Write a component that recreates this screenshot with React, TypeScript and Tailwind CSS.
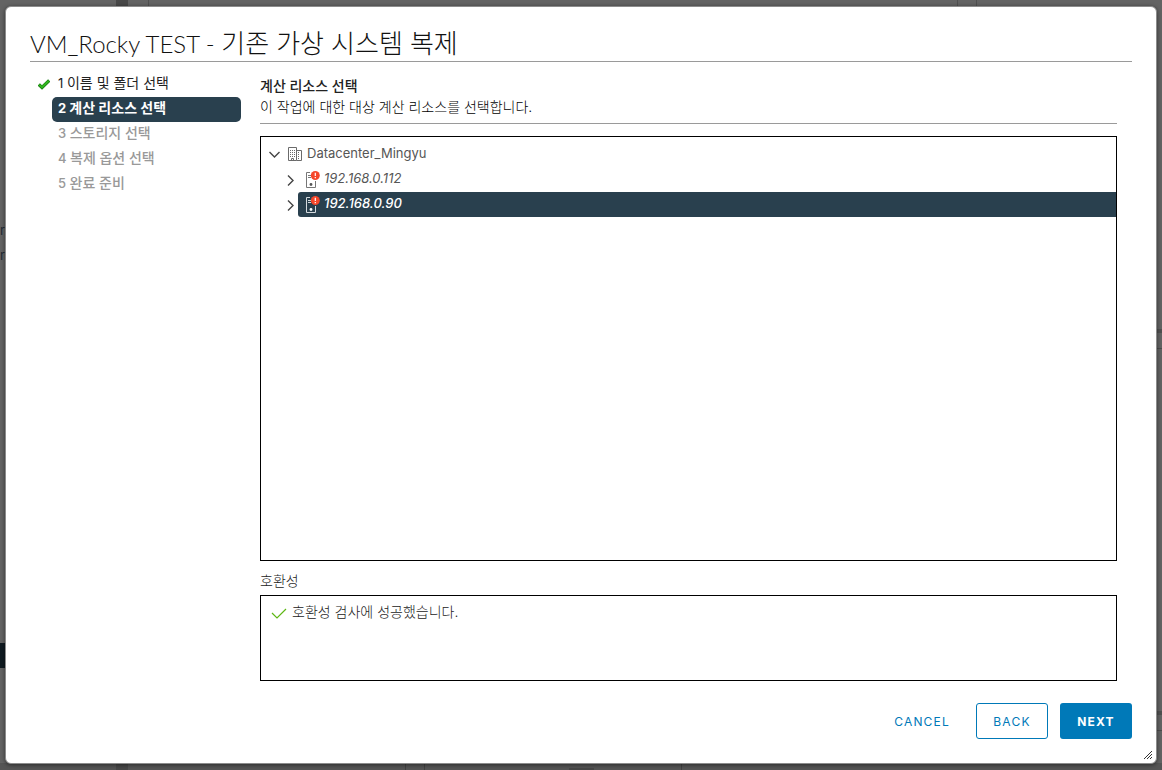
import { useState } from 'react'

const steps = [
    { id: 1, label: '이름 및 폴더 선택' },
    { id: 2, label: '계산 리소스 선택' },
    { id: 3, label: '스토리지 선택' },
    { id: 4, label: '복제 옵션 선택' },
    { id: 5, label: '완료 준비' },
]

const hosts = ['192.168.0.112', '192.168.0.90']

function Chevron({ open = false }: { open?: boolean }) {
    return (
        <svg className="w-3 h-3 shrink-0" viewBox="0 0 12 12" fill="none" stroke="#454545" strokeWidth="1.4" aria-hidden="true">
            <path d={open ? 'M0.5 4l5 5 5-5' : 'M3 1.5l5 5-5 5'} />
        </svg>
    )
}

function DatacenterIcon() {
    return (
        <svg className="w-4 h-4 shrink-0" viewBox="0 0 16 16" fill="none" stroke="#6b6b6b" aria-hidden="true">
            <path d="M1.5 14.5v-13h8v13zM9.5 4.5h5v10h-5M4.5 14.5v-2h2v2" />
            <path d="M3 4.5h5M3 6.5h5M3 8.5h5M3 10.5h5" strokeDasharray="1 1" />
            <path d="M11 6.5h2M11 8.5h2M11 10.5h2M11 12.5h2" strokeDasharray="1 1" />
        </svg>
    )
}

function HostIcon({ selected }: { selected: boolean }) {
    return (
        <svg className="w-4 h-5 shrink-0" viewBox="0 0 16 20" fill="none" stroke={selected ? '#d5dbdf' : '#777777'} aria-hidden="true">
            <path d="M6 3.5H2.5v15h9V12" />
            <path d="M4 6.5h3M4 8.5h3" />
            <circle cx="7" cy="15.5" r="1.4" fill={selected ? '#ffffff' : '#555555'} stroke="none" />
            <circle cx="11.3" cy="6.5" r="4.5" fill="#f5472a" stroke="none" />
            <path d="M11.3 3.8v3.2M11.3 8v1.3" stroke="#ffffff" strokeWidth="1.2" />
        </svg>
    )
}

/* Dimmed page behind the dialog */
function Backdrop() {
    return (
        <div className="absolute inset-0 bg-[#636363] overflow-hidden" aria-hidden="true">
            <div className="absolute inset-x-0 bottom-0 h-[7px] bg-[#555555]" />
            <div className="absolute left-[116px] top-0 w-3 h-[7px] bg-[#484848]" />
            <div className="absolute left-[148px] top-0 w-px h-[7px] bg-[#505050]" />
            <div className="absolute left-[957px] top-0 w-px h-[7px] bg-[#505050]" />
            <div className="absolute left-[976px] top-0 w-px h-[7px] bg-[#505050]" />
            <div className="absolute left-0 top-[643px] w-1.5 h-[25px] bg-[#0f1a20]" />
            <p className="absolute left-0 top-[218px] font-['Inter'] text-[13px] leading-[25px] text-[#202a33]">
                r<br />r
            </p>
            <div className="absolute right-0 top-[329px] w-1.5 h-1 bg-[#505050]" />
            <div className="absolute right-0 top-[348px] w-1.5 h-px bg-[#4c4c4c]" />
            <div className="absolute right-0 top-[711px] w-1.5 h-1 bg-[#505050]" />
            <div className="absolute right-0 top-[730px] w-1.5 h-px bg-[#4c4c4c]" />
            <div className="absolute left-[116px] bottom-0 w-3 h-[7px] bg-[#484848]" />
            <div className="absolute left-[405px] bottom-0 w-px h-[7px] bg-[#424242]" />
            <div className="absolute left-[424px] bottom-0 w-px h-[7px] bg-[#424242]" />
            <div className="absolute left-[681px] bottom-0 w-px h-[7px] bg-[#424242]" />
            <div className="absolute left-[569px] bottom-0 w-[25px] h-0.5 bg-[#474747]" />
        </div>
    )
}

export default function App() {
    const [selectedHost, setSelectedHost] = useState('192.168.0.90')
    const currentStep = 2

    return (
        <div className="relative min-h-screen flex p-[5px] pt-1.5 pb-1.5 font-['Inter','Noto_Sans_CJK_KR',sans-serif] text-sm text-[#111111]">
            <Backdrop />

            <div
                role="dialog"
                aria-labelledby="wizard-title"
                className="relative flex-1 flex flex-col bg-white border border-[#8c8c8c] rounded-md px-6 pb-6 pt-5 shadow-[0_1px_4px_rgba(0,0,0,0.5)]"
            >
                {/* Title */}
                <h1
                    id="wizard-title"
                    className="border-b border-[#9a9a9a] h-[35px] font-['Lato','Noto_Sans_CJK_KR',sans-serif] font-light text-2xl leading-8 text-[#111111] whitespace-nowrap"
                >
                    VM_Rocky TEST - <span className="text-[26px]">기존 가상 시스템 복제</span>
                </h1>

                <div className="flex-1 flex">
                    {/* Wizard steps */}
                    <nav className="w-[230px] shrink-0 pt-[10px]">
                        <ol>
                            {steps.map((step) => (
                                <li key={step.id} className="flex h-[25px] items-center">
                                    <span className="w-[22px] shrink-0 flex justify-center pl-1.5">
                                        {step.id < currentStep && (
                                            <svg className="w-3 h-3" viewBox="0 0 12 12" fill="none" aria-hidden="true">
                                                <path d="M0.8 5.5l3.2 3L11.2 1.5" stroke="#187a12" strokeWidth="3.2" />
                                                <path d="M1.2 5.6L4 8.3l6.8-6.6" stroke="#31b51e" strokeWidth="2" />
                                            </svg>
                                        )}
                                    </span>
                                    <span
                                        className={`w-[189px] h-[25px] px-1.5 leading-[22px] text-[13px] rounded-[5px] ${
                                            step.id === currentStep
                                                ? 'bg-[#29404e] text-white font-bold'
                                                : step.id < currentStep
                                                  ? 'text-[#222222]'
                                                  : 'text-[#999999] font-medium'
                                        }`}
                                    >
                                        {step.id} <span className="text-sm">{step.label}</span>
                                    </span>
                                </li>
                            ))}
                        </ol>
                    </nav>

                    {/* Compute resource page */}
                    <section className="flex-1 min-w-0 flex flex-col pr-[15px]">
                        <header className="pt-[13px] pb-1.5 border-b border-[#9a9a9a]">
                            <h2 className="font-medium leading-[21px] text-[#222222]">계산 리소스 선택</h2>
                            <p className="font-light leading-[21px] text-black">이 작업에 대한 대상 계산 리소스를 선택합니다.</p>
                        </header>

                        <ul role="tree" aria-label="계산 리소스" className="mt-3 flex-1 border border-black pl-2 pt-[5px] text-[13px]">
                            <li role="treeitem" aria-expanded="true" aria-selected="false">
                                <div className="flex items-center h-[25px] pb-0.5 text-[#565656]">
                                    <Chevron open />
                                    <span className="flex items-center gap-1 pl-1.5">
                                        <DatacenterIcon />
                                        Datacenter_Mingyu
                                    </span>
                                </div>
                                <ul role="group" className="pl-4">
                                    {hosts.map((host) => (
                                        <li
                                            key={host}
                                            role="treeitem"
                                            aria-selected={host === selectedHost}
                                            className="flex items-center h-[25px]"
                                        >
                                            <Chevron />
                                            <button
                                                type="button"
                                                onClick={() => setSelectedHost(host)}
                                                className={`ml-px flex-1 h-[25px] flex items-center gap-1 pl-1.5 pb-0.5 italic rounded-l-[3px] ${
                                                    host === selectedHost
                                                        ? 'bg-[#29404e] text-white font-medium'
                                                        : 'text-[#565656]'
                                                }`}
                                            >
                                                <HostIcon selected={host === selectedHost} />
                                                {host}
                                            </button>
                                        </li>
                                    ))}
                                </ul>
                            </li>
                        </ul>

                        {/* Compatibility */}
                        <h3 className="pt-[10px] pb-1 font-light leading-5 text-[#222222]">호환성</h3>
                        <div className="h-[86px] border border-black px-[10px] py-1.5">
                            <p className="flex items-center gap-[5px] font-light leading-5 text-[#222222]">
                                <svg className="w-4 h-4" viewBox="0 0 16 16" fill="none" stroke="#5eb715" strokeWidth="1.2" aria-hidden="true">
                                    <path d="M1 9l5 5 9-9" />
                                </svg>
                                호환성 검사에 성공했습니다.
                            </p>
                        </div>
                    </section>
                </div>

                {/* Footer buttons */}
                <footer className="mt-[22px] flex justify-end gap-3 text-xs text-[#0079b8]">
                    <button type="button" className="h-9 px-[14px] pt-0.5 tracking-widest">
                        CANCEL
                    </button>
                    <button type="button" className="w-[72px] h-9 pt-0.5 border border-[#0079b8] rounded-[3px] tracking-widest">
                        BACK
                    </button>
                    <button type="button" className="w-[72px] h-9 pt-0.5 bg-[#0079b8] text-white font-bold rounded-[3px] tracking-widest">
                        NEXT
                    </button>
                </footer>

                {/* Resize grip */}
                <svg className="absolute right-1 bottom-1 w-2 h-2" viewBox="0 0 8 8" stroke="#333333" strokeWidth="1" aria-hidden="true">
                    <path d="M0 8L8 0M3 8l5-5M6 8l2-2" />
                </svg>
            </div>
        </div>
    )
}
